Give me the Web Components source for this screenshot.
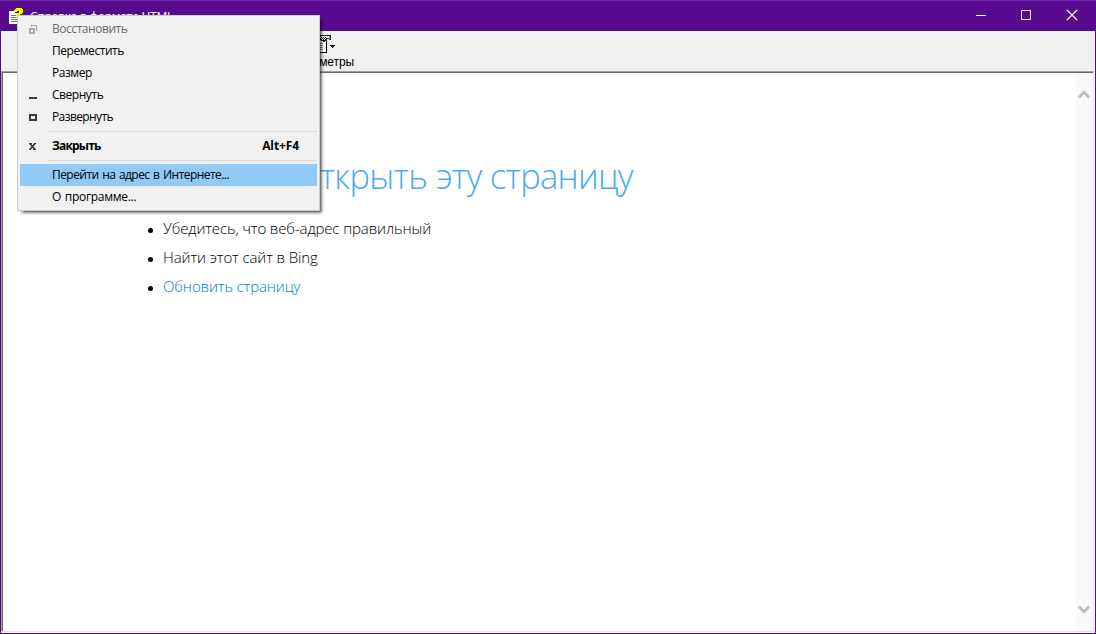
<!DOCTYPE html>
<html lang="ru">
<head>
<meta charset="utf-8">
<title>Справка в формате HTML</title>
<style>
  html, body { margin: 0; height: 100%; overflow: hidden; }
  body { font: 12px "Open Sans", "Noto Sans", sans-serif; color: #000; }
</style>
</head>
<body>
<help-window>
  <title-bar slot="title">Справка в формате HTML</title-bar>
  <tool-bar slot="tools"><tool-button>Параметры</tool-button></tool-bar>
  <error-page heading="Не удается открыть эту страницу">
    <error-tip>Убедитесь, что веб-адрес правильный</error-tip>
    <error-tip>Найти этот сайт в Bing</error-tip>
    <error-tip link>Обновить страницу</error-tip>
  </error-page>
  <scroll-bar slot="scroll"></scroll-bar>
  <system-menu slot="menu">
    <menu-item icon="restore" disabled>Восстановить</menu-item>
    <menu-item>Переместить</menu-item>
    <menu-item>Размер</menu-item>
    <menu-item icon="minimize">Свернуть</menu-item>
    <menu-item icon="maximize" style="--ls:-.6px">Развернуть</menu-item>
    <menu-line></menu-line>
    <menu-item icon="close" primary hint="Alt+F4" style="--ls:-.8px">Закрыть</menu-item>
    <menu-line></menu-line>
    <menu-item selected style="--ls:-.55px">Перейти на адрес в Интернете...</menu-item>
    <menu-item style="--ls:-.3px">О программе...</menu-item>
  </system-menu>
</help-window>

<script>
function define(name, html, setup) {
  customElements.define(name, class extends HTMLElement {
    constructor() {
      super();
      this.attachShadow({ mode: 'open' });
    }
    connectedCallback() {
      this.shadowRoot.innerHTML = html;
      if (setup) setup(this, this.shadowRoot);
    }
  });
}

define('help-window', `
  <style>
    :host { display:flex; flex-direction:column; box-sizing:border-box; position:relative; width:1096px; height:634px; border:1px solid #580a8f; border-top:0; background:#f0f0f0; }
    .client { display:flex; flex:1; min-height:0; box-sizing:border-box; margin:0 1px 1px 0; border:1px solid; border-color:#a0a0a0 #e3e3e3 #e3e3e3 #a0a0a0; background:#fff; box-shadow:1px 1px #fff; }
    .inner { display:flex; flex:1; border:solid #696969; border-width:1px 0 0 1px; }
    .page { flex:1; }
  </style>
  <slot name="title"></slot>
  <slot name="tools"></slot>
  <div class="client"><div class="inner">
    <div class="page"><slot></slot></div>
    <slot name="scroll"></slot>
  </div></div>
  <slot name="menu"></slot>
`);

define('title-bar', `
  <style>
    :host { display:flex; align-items:center; box-sizing:border-box; height:31px; margin:0 -1px; padding-left:8px; border-top:1px solid #6922a0; background:#580a8f; color:#fff; }
    .text { flex:1; margin-left:5px; letter-spacing:-.25px; }
    .ctl { width:46px; height:30px; }
  </style>
  <svg width="17" height="18" viewBox="0 0 17 18" shape-rendering="crispEdges">
    <path d="M1 4h7l3 3v10H1z" fill="#fff"/>
    <path d="M3 8.500h5M3 10.500h6M3 12.500h6M3 14.500h6" stroke="#777"/>
    <path d="M7 2h1V1h6v1h1v4h-1v1h-2v2H8V7h2V6h1V4H9v1H6V3h1z" fill="#ff0"/>
    <path d="M7 1.500h1M8 .5h6M15.500 2v4M14.500 6v2M12.500 7v2M7 5.500h3" stroke="#331"/>
    <path d="M8 10h3v1H8z" fill="#ff0"/>
  </svg>
  <span class="text"><slot></slot></span>
  <svg class="ctl" viewBox="0 0 46 30"><path d="M18 14.500h10" stroke="#fff"/></svg>
  <svg class="ctl" viewBox="0 0 46 30"><path d="M17.500 9.500h9v9h-9z" fill="none" stroke="#fff"/></svg>
  <svg class="ctl" viewBox="0 0 46 30"><path d="M17 9l10 10M27 9l-10 10" stroke="#fff" stroke-width="1.2"/></svg>
`);

define('tool-bar', `
  <style>:host { display:flex; height:40px; width:353px; justify-content:flex-end; background:#f0f0f0; }</style>
  <slot></slot>
`);

define('tool-button', `
  <style>
    :host { display:flex; flex-direction:column; align-items:center; font:12px/13px "Liberation Sans", Arial, sans-serif; letter-spacing:-.1px; white-space:nowrap; }
    svg { margin:4px 0 2px 2px; }
  </style>
  <svg width="26" height="19" viewBox="-4 0 26 19" shape-rendering="crispEdges">
    <path d="M-.5 4.500h13v13h-13z" fill="#fff" stroke="#000"/>
    <path d="M2 8.500h7M2 10.500h7M2 12.500h7M2 14.500h7" stroke="#999"/>
    <path d="M6 0h11v5h-2v-1h-2v2h-2v1H9V6H7V4H5V2h1z" fill="#222"/>
    <path d="M7 1h8v1H7zM6 2h1v1H6zM8 2h1v1H8zM10 2h1v1h-1zM12 2h3v1h-3zM7 3h1v1H7zM9 3h1v1H9zM11 3h1v1h-1zM8 4h1v1H8zM10 4h1v1h-1z" fill="#fff"/>
    <path d="M15 1h1v3h-1z" fill="#999"/>
    <path d="M16 10h5v1h-1v1h-1v1h-1v-1h-1v-1h-1z" fill="#000"/>
  </svg>
  <span><slot></slot></span>
`);

define('error-page', `
  <style>
    :host { display:block; padding-top:77px; }
    h1 { margin:0; width:630px; text-align:right; white-space:nowrap; font-size:34.500px; font-weight:300; line-height:52px; color:#4ba9f7; letter-spacing:-.7px; }
    .tips { display:flex; flex-direction:column; margin:11px 0 0 144px; }
  </style>
  <h1></h1>
  <div class="tips"><slot></slot></div>
`, (el, root) => {
  root.querySelector('h1').textContent = el.getAttribute('heading');
});

define('error-tip', `
  <style>
    :host { display:flex; align-items:center; height:29px; font-size:15px; font-weight:300; letter-spacing:-.12px; white-space:nowrap; }
    :host([link]) span { color:#0078d7; }
    i { width:5px; height:5px; margin:6px 10px 0 1px; border-radius:50%; background:#000; }
  </style>
  <i></i><span><slot></slot></span>
`);

define('scroll-bar', `
  <style>
    :host { display:flex; flex-direction:column; justify-content:space-between; width:17px; box-sizing:border-box; padding:17px 3px 17px 2px; background:#f9f9f9; }
    svg { fill:none; stroke:#bfbfbf; stroke-width:3; }
  </style>
  <svg width="12" height="10" viewBox="0 0 12 10"><path d="M.8 7.500L6 2.300l5.200 5.200"/></svg>
  <svg width="12" height="10" viewBox="0 0 12 10"><path d="M.8 2.500L6 7.700l5.200-5.200"/></svg>
`);

// overlays the window, opened from the title bar icon
define('system-menu', `
  <style>
    :host { display:flex; flex-direction:column; position:absolute; left:16px; top:15px; width:303px; height:196px; box-sizing:border-box; padding:2px; border:1px solid #ccc; background:#f1f1f1; box-shadow:4px 4px 2px -3px rgba(0,0,0,.45), 3px 3px 3px -1px rgba(0,0,0,.4); }
  </style>
  <slot></slot>
`);

define('menu-line', `
  <style>
    :host { display:block; height:1px; margin:3px 0 3px 28px; background:#d7d7d7; }
  </style>
`);

const icons = {
  restore: '<path d="M2 5h4v4H2z" stroke-width="2"/><path d="M3 1.500h5.500V7M3.500 1v2"/>',
  minimize: '<path d="M1 8h8" stroke-width="2"/>',
  maximize: '<path d="M2 3h6v5H2z" stroke-width="2"/>',
  close: '<path d="M2 2.500l5 6M7 2.500L2 8.500" stroke-width="1.800" shape-rendering="auto"/><path d="M1 2.500h3M6 2.500h2M1 8.500h2M5 8.500h3"/>'
};

define('menu-item', `
  <style>
    :host { display:flex; align-items:center; height:22px; white-space:nowrap; word-spacing:1px; letter-spacing:var(--ls, -.45px); }
    :host([disabled]) { color:#6d6d6d; }
    :host([selected]) { background:#91c9f7; }
    :host([primary]) { font-weight:700; }
    .icon { width:10px; height:11px; margin:0 14px 0 8px; fill:none; stroke:#3c3c3c; }
    :host([disabled]) .icon { stroke:#aaa; }
    .text { flex:1; padding-bottom:1px; }
    .hint { margin-right:18px; padding-bottom:1px; letter-spacing:-.1px; }
  </style>
  <svg class="icon" viewBox="0 0 10 11" shape-rendering="crispEdges"></svg>
  <span class="text"><slot></slot></span>
  <span class="hint"></span>
`, (el, root) => {
  root.querySelector('.icon').innerHTML = icons[el.getAttribute('icon')] || '';
  root.querySelector('.hint').textContent = el.getAttribute('hint') || '';
});
</script>
</body>
</html>
